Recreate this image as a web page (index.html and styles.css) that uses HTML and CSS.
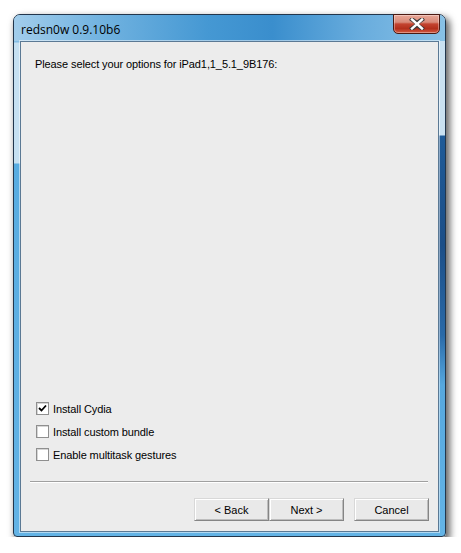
FILE: index.html
```html
<!DOCTYPE html>
<html lang="en">
<head>
    <meta charset="UTF-8">
    <title>redsn0w 0.9.10b6</title>
    <link rel="stylesheet" href="styles.css">
</head>
<body>
    <div class="window">
        <div class="titlebar">
            <span class="title">redsn0w 0.9.10b6</span>
            <button class="close-btn" aria-label="Close">
                <svg width="16" height="12" viewBox="0 0 16 12">
                    <path d="M3 1.5 L8 5 L13 1.5 M3 10.5 L8 7 L13 10.5" fill="none" stroke="#3a3a3a" stroke-width="4.2" stroke-linecap="square"/>
                    <path d="M3 1.5 L13 10.5 M13 1.5 L3 10.5" fill="none" stroke="#ffffff" stroke-width="2.4" stroke-linecap="square"/>
                </svg>
            </button>
        </div>

        <div class="client">
            <p class="prompt">Please select your options for iPad1,1_5.1_9B176:</p>

            <div class="spacer"></div>

            <div class="options">
                <label class="option">
                    <span class="checkbox checked">
                        <svg width="9" height="9" viewBox="0 0 9 9">
                            <path d="M1 4 L3.5 6.5 L8 1.5" fill="none" stroke="#000" stroke-width="1.8"/>
                        </svg>
                    </span>
                    Install Cydia
                </label>
                <label class="option">
                    <span class="checkbox"></span>
                    Install custom bundle
                </label>
                <label class="option">
                    <span class="checkbox"></span>
                    Enable multitask gestures
                </label>
            </div>

            <div class="separator"></div>

            <div class="buttons">
                <button class="btn">&lt; Back</button>
                <button class="btn">Next &gt;</button>
                <button class="btn cancel">Cancel</button>
            </div>
        </div>
    </div>
</body>
</html>
```

FILE: styles.css
```css
body {
    margin: 0;
    padding: 14px 0 0 13px;
    background: #ffffff;
    font-family: 'Liberation Sans', Arial, sans-serif;
    font-size: 11px;
    letter-spacing: -0.1px;
    color: #000;
}

.window {
    position: relative;
    box-sizing: border-box;
    width: 433px;
    height: 523px;
    display: flex;
    flex-direction: column;
    border: 1px solid #22364c;
    border-radius: 7px 7px 4px 4px;
    background:
        linear-gradient(180deg, #c9e1f1 0, #c9e1f1 120px, #1f5b98 121px, #1c4f88 230px, #2a6aa8 320px, #56a8de 370px, #64b4e6 100%) right top / 7px 100% no-repeat,
        linear-gradient(180deg, #a8d0ec 0, #84bde4 27px, #c6e0f1 28px, #c6e0f1 148px, #58ace1 149px, #63b3e5 100%);
    box-shadow: 3px 4px 7px 1px rgba(0, 0, 0, 0.6);
}

.titlebar {
    height: 26px;
    display: flex;
    align-items: center;
    padding-left: 7px;
    border-radius: 6px 6px 0 0;
    background: linear-gradient(90deg, #a2cdeb 0, #72b3e0 20%, #4598d3 45%, #3a8ecd 60%, #68acdd 80%, #88c1e6 100%);
}

.title {
    font-family: 'Open Sans', sans-serif;
    font-size: 12px;
    letter-spacing: 0;
    color: #000;
    margin-top: 2px;
}

.close-btn {
    position: absolute;
    top: -1px;
    right: 5px;
    width: 47px;
    height: 20px;
    padding: 0;
    display: flex;
    align-items: center;
    justify-content: center;
    border: 1px solid #4a1a12;
    border-radius: 0 0 5px 5px;
    background: linear-gradient(180deg, #e9a797 0, #d88a79 40%, #c34430 50%, #b3301c 75%, #d35a42 100%);
    box-shadow: inset 0 0 0 1px rgba(255, 255, 255, 0.35);
}

.client {
    flex: 1;
    margin: 0 6px 4px 6px;
    display: flex;
    flex-direction: column;
    background: #ececec;
    border: 1px solid #5b7994;
    box-shadow: 0 0 0 1px rgba(255, 255, 255, 0.5);
}

.prompt {
    margin: 16px 0 0 14px;
    line-height: 13px;
}

.spacer {
    flex: 1;
}

.options {
    margin-left: 15px;
}

.option {
    height: 23px;
    display: flex;
    align-items: center;
    gap: 4px;
}

.checkbox {
    box-sizing: border-box;
    width: 13px;
    height: 13px;
    display: flex;
    align-items: center;
    justify-content: center;
    background: #fff;
    border: 1px solid #8f8f8f;
    box-shadow: inset 1px 1px 0 #d6d6d6;
}

.separator {
    margin: 15px 10px 0 9px;
    height: 1px;
    background: #a0a0a0;
    border-bottom: 1px solid #ffffff;
}

.buttons {
    display: flex;
    justify-content: flex-end;
    margin: 15px 9px 10px 0;
}

.btn {
    box-sizing: border-box;
    width: 75px;
    height: 23px;
    padding: 0;
    font-family: 'Liberation Sans', Arial, sans-serif;
    font-size: 11px;
    color: #000;
    background: #e9e9e9;
    border: 1px solid #9a9a9a;
    border-color: #d8d8d8 #858585 #858585 #d8d8d8;
    box-shadow: inset 1px 1px 0 #ffffff, inset -1px -1px 0 #bdbdbd;
}

.cancel {
    margin-left: 10px;
}
```
